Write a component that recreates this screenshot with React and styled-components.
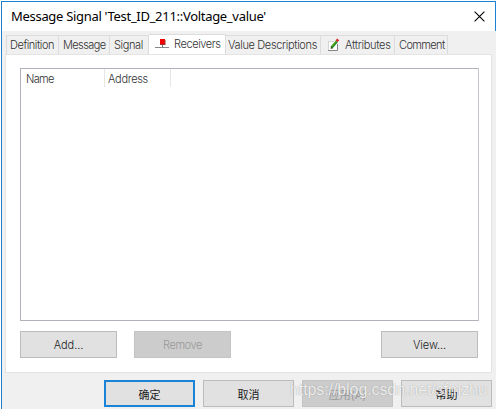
import React from "react";
import styled, { createGlobalStyle } from "styled-components";

const GlobalStyle = createGlobalStyle`
  * { box-sizing: border-box; }
  body { margin: 0; background: #fff; overflow: hidden; }
`;

const Dialog = styled.div`
  position: relative;
  width: 496px;
  height: 409px;
  padding: 1px 0 0 1px;
  display: flex;
  background: #fff;
  font-family: Inter, "Liberation Sans", "Noto Sans CJK SC", sans-serif;
  font-size: 11px;
  color: #333;
`;

const Frame = styled.div`
  flex: 1;
  display: flex;
  flex-direction: column;
  border-left: 1px solid #1f7fc9;
  border-top: 1px solid #1883d7;
  background: #f0f0f0;
`;

const TitleBar = styled.header`
  height: 29px;
  flex: none;
  display: flex;
  align-items: center;
  justify-content: space-between;
  padding: 0 10px 0 9px;
  background: #fff;
  border-right: 1px solid #1883d7;
`;

const Title = styled.h1`
  margin: 0;
  padding-bottom: 2px;
  font: 400 13px/20px "Noto Sans", "Open Sans", sans-serif;
  letter-spacing: ${(p) => p.$spacing}px;
  color: #000;
  white-space: nowrap;
`;

const CloseButton = styled.button`
  display: flex;
  padding: 0;
  border: 0;
  background: none;
`;

const TabStrip = styled.nav`
  height: 23px;
  flex: none;
  display: flex;
  align-items: flex-end;
  padding-left: 4px;
`;

const Tab = styled.button`
  width: ${(p) => p.$width}px;
  height: ${(p) => (p.$active ? 21 : 19)}px;
  margin-bottom: ${(p) => (p.$active ? -1 : 0)}px;
  padding: 0 0 ${(p) => (p.$active ? 3 : 0)}px ${(p) => p.$inset}px;
  display: flex;
  align-items: center;
  border: 0 solid #dcdcdc;
  border-width: 1px 1px 0 0;
  background: ${(p) => (p.$active ? "#fff" : "#f0f0f0")};
  font: inherit;
  font-weight: 300;
  color: inherit;
  letter-spacing: ${(p) => p.$spacing}px;
  white-space: nowrap;
  svg { flex: none; margin-right: ${(p) => p.$gap || 0}px; }
  &:first-child { border-left-width: 1px; }
`;

const Page = styled.main`
  height: 319px;
  flex: none;
  margin: 0 4px 0 3px;
  padding: 13px 12px 0 14px;
  border: 1px solid #e4e4e4;
  background: #fff;
`;

const List = styled.section`
  width: 459px;
  height: 253px;
  border: 1px solid #b0b4ba;
  border-right-color: #c5c8cf;
`;

const ListHeader = styled.div`
  display: flex;
  height: 18px;
`;

const Column = styled.div`
  width: ${(p) => p.$width}px;
  padding-left: ${(p) => p.$inset}px;
  border-right: 1px solid #e5e5e5;
  font-weight: 300;
  line-height: 20px;
  letter-spacing: ${(p) => p.$spacing}px;
`;

const Actions = styled.div`
  display: grid;
  grid-template-columns: 97px 97px 97px;
  column-gap: 17px;
  margin-top: 10px;
  > :last-child { margin-left: 133px; }
`;

const Button = styled.button`
  width: ${(p) => p.$width}px;
  height: 27px;
  padding: 0;
  border: ${(p) => (p.$primary ? "2px solid #1883d7" : "1px solid #bcbcbc")};
  ${(p) => p.disabled && "border-color: #c4c4c4;"}
  background: ${(p) => (p.disabled ? "#cccccc" : "#e1e1e1")};
  color: ${(p) => (p.disabled ? "#999" : "#222")};
  font: inherit;
  font-weight: ${(p) => p.$weight || 300};
  letter-spacing: ${(p) => p.$spacing || 0}px;
`;

const Footer = styled.footer`
  display: flex;
  gap: 8px;
  padding: 7px 0 0 102px;
`;

const Watermark = styled.div`
  position: absolute;
  left: 290px;
  top: 380px;
  font: 400 16px/20px "Liberation Sans", sans-serif;
  letter-spacing: ${(p) => p.$spacing}px;
  color: rgba(255, 255, 255, 0.85);
  text-shadow: 0 0 1px rgba(110, 110, 110, 0.7);
  white-space: nowrap;
`;

const CloseIcon = () => (
  <svg width="11" height="11" viewBox="0 0 11 11">
    <path d="M.6.6l9.8 9.8M10.4.6L.6 10.4" stroke="#000" strokeWidth="1.1" />
  </svg>
);

const ReceiverIcon = () => (
  <svg width="16" height="14" viewBox="0 0 16 14">
    <rect x="6" y="2" width="5" height="5" fill="#f40000" />
    <path d="M6 7.5h5M11 3v5" stroke="#9c3434" />
    <path d="M8.5 8v2" stroke="#777" />
    <path d="M1 10.5h14" stroke="#888" />
  </svg>
);

const AttributeIcon = () => (
  <svg width="13" height="14" viewBox="0 0 13 14">
    <path d="M1 3h9v10H1z" fill="#fff" />
    <path d="M1 3.5h6M1.5 4v8" stroke="#d5d5d5" />
    <path d="M1 12.5h9.5V6" fill="none" stroke="#858585" />
    <path d="M4.3 9.8L9.8 3.3" stroke="#218a20" strokeWidth="2.6" />
    <path d="M5 8l4-4.7" stroke="#9bc72e" strokeWidth=".8" />
    <path d="M3.5 11l.8-2.2 1.6 1.4z" fill="#5d4a22" />
    <path d="M9.6 3.2l1.6-1.7" stroke="#d91f1f" strokeWidth="2.6" />
  </svg>
);

export default function App() {
  return (
    <>
      <GlobalStyle />
      <Dialog>
        <Frame>
          <TitleBar>
            <Title $spacing={-0.3}>Message Signal 'Test_ID_211::Voltage_value'</Title>
            <CloseButton aria-label="Close"><CloseIcon /></CloseButton>
          </TitleBar>
          <TabStrip>
            <Tab $width={53} $inset={3} $spacing={-0.45}>Definition</Tab>
            <Tab $width={51} $inset={4} $spacing={-0.6}>Message</Tab>
            <Tab $width={39} $inset={4} $spacing={-0.4}>Signal</Tab>
            <Tab $width={77} $inset={5} $gap={4} $spacing={-0.4} $active><ReceiverIcon />Receivers</Tab>
            <Tab $width={95} $inset={2} $spacing={-0.35}>Value Descriptions</Tab>
            <Tab $width={74} $inset={6} $gap={5} $spacing={-0.3}><AttributeIcon />Attributes</Tab>
            <Tab $width={53} $inset={4} $spacing={-0.6}>Comment</Tab>
          </TabStrip>
          <Page>
            <List>
              <ListHeader>
                <Column $width={84} $inset={5} $spacing={-0.7}>Name</Column>
                <Column $width={66} $inset={3} $spacing={-0.3}>Address</Column>
              </ListHeader>
            </List>
            <Actions>
              <Button $width={97} $spacing={-0.1}>Add...</Button>
              <Button $width={97} $spacing={-0.4} disabled>Remove</Button>
              <Button $width={97} $spacing={-0.1}>View...</Button>
            </Actions>
          </Page>
          <Footer>
            <Button $width={91} $weight={400} $primary>确定</Button>
            <Button $width={91} $weight={400}>取消</Button>
            <Button $width={91} $weight={400} disabled>应用(A)</Button>
            <Button $width={91} $weight={400}>帮助</Button>
          </Footer>
        </Frame>
        <Watermark $spacing={-0.09}>https://blog.csdn.net/sfmzhu</Watermark>
      </Dialog>
    </>
  );
}
